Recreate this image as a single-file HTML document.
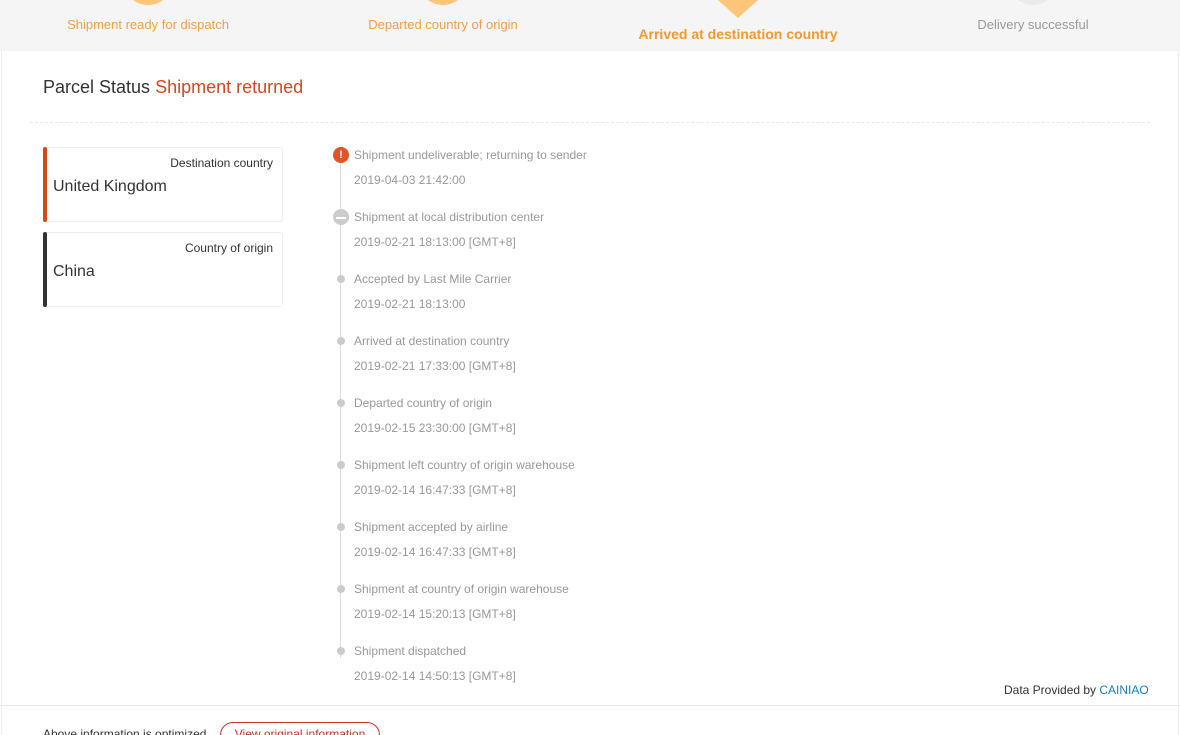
<!DOCTYPE html>
<html><head><meta charset="utf-8"><style>
*{margin:0;padding:0;box-sizing:border-box}
html,body{width:1180px;height:735px;overflow:hidden}
body{background:#fff;font-family:"Liberation Sans",sans-serif;position:relative}
.top{position:absolute;left:0;top:0;width:1180px;height:51px;background:#f5f5f5}
.step{position:absolute;font-size:13px;text-align:center;width:260px}
.circ{position:absolute;border-radius:50%}
.main{position:absolute;left:1px;top:51px;width:1178px;height:684px;border-left:1px solid #eee;border-right:1px solid #eee}
.abs{position:absolute;white-space:nowrap}
.card{position:absolute;left:43px;width:240px;height:75px;border:1px solid #eee;border-radius:3px;background:#fff}
.card .bar{position:absolute;left:-1px;top:-1px;bottom:-1px;width:4px;border-radius:2px}
.card .lab{position:absolute;right:9px;top:8px;font-size:12px;color:#333}
.card .val{position:absolute;left:9px;font-size:16px;color:#333}
.tl{position:absolute;left:340px;top:158px;width:1px;height:500px;background:#ddd}
.it{position:absolute;left:354px;font-size:12px;color:#999}
.dot{position:absolute;left:337px;width:8px;height:8px;border-radius:50%;background:#ccc}
</style></head><body>
<div class="top">
 <div class="circ" style="left:123px;top:-45px;width:50px;height:50px;background:#fcc57a"></div>
 <div class="circ" style="left:418px;top:-45px;width:50px;height:50px;background:#fcc57a"></div>
 <div style="position:absolute;left:718px;top:0;width:0;height:0;border-left:20px solid transparent;border-right:20px solid transparent;border-top:18px solid #fcc57a"></div>
 <div class="circ" style="left:1008px;top:-45px;width:50px;height:50px;background:#ebebeb"></div>
 <div class="step" style="left:18px;top:17px;color:#f0a045">Shipment ready for dispatch</div>
 <div class="step" style="left:313px;top:17px;color:#f0a045">Departed country of origin</div>
 <div class="step" style="left:608px;top:26px;color:#f09a30;font-weight:bold;font-size:14px">Arrived at destination country</div>
 <div class="step" style="left:903px;top:17px;color:#999">Delivery successful</div>
</div>
<div class="main"></div>
<div class="abs" style="left:43px;top:77px;font-size:18px;color:#333">Parcel Status <span style="color:#cc4a26">Shipment returned</span></div>
<div class="abs" style="left:30px;top:122px;width:1120px;border-top:1px dashed #e8e8e8"></div>
<div class="card" style="top:147px"><div class="bar" style="background:#d04a1e"></div><div class="lab">Destination country</div><div class="val" style="top:30px">United Kingdom</div></div>
<div class="card" style="top:232px"><div class="bar" style="background:#333"></div><div class="lab">Country of origin</div><div class="val" style="top:30px">China</div></div>
<div class="tl"></div>
<div class="circ" style="left:333px;top:147px;width:16px;height:16px;background:#e2522c;color:#fff;font-size:11px;font-weight:bold;text-align:center;line-height:16px">!</div>
<div class="circ" style="left:333px;top:209px;width:16px;height:16px;background:#ccc"><div style="position:absolute;left:3px;top:8px;width:10px;height:2px;background:#fff"></div></div>
<div class="it" style="top:148px">Shipment undeliverable; returning to sender</div><div class="it" style="top:173px">2019-04-03 21:42:00</div>
<div class="it" style="top:210px">Shipment at local distribution center</div><div class="it" style="top:235px">2019-02-21 18:13:00 [GMT+8]</div>
<div class="dot" style="top:275px"></div><div class="it" style="top:272px">Accepted by Last Mile Carrier</div><div class="it" style="top:297px">2019-02-21 18:13:00</div>
<div class="dot" style="top:337px"></div><div class="it" style="top:334px">Arrived at destination country</div><div class="it" style="top:359px">2019-02-21 17:33:00 [GMT+8]</div>
<div class="dot" style="top:399px"></div><div class="it" style="top:396px">Departed country of origin</div><div class="it" style="top:421px">2019-02-15 23:30:00 [GMT+8]</div>
<div class="dot" style="top:461px"></div><div class="it" style="top:458px">Shipment left country of origin warehouse</div><div class="it" style="top:483px">2019-02-14 16:47:33 [GMT+8]</div>
<div class="dot" style="top:523px"></div><div class="it" style="top:520px">Shipment accepted by airline</div><div class="it" style="top:545px">2019-02-14 16:47:33 [GMT+8]</div>
<div class="dot" style="top:585px"></div><div class="it" style="top:582px">Shipment at country of origin warehouse</div><div class="it" style="top:607px">2019-02-14 15:20:13 [GMT+8]</div>
<div class="dot" style="top:647px"></div><div class="it" style="top:644px">Shipment dispatched</div><div class="it" style="top:669px">2019-02-14 14:50:13 [GMT+8]</div>
<div class="abs" style="left:1004px;top:683px;font-size:12px;color:#333">Data Provided by <span style="color:#1a7ec0">CAINIAO</span></div>
<div class="abs" style="left:0;top:705px;width:1180px;border-top:1px solid #e8e8e8"></div>
<div class="abs" style="left:43px;top:727px;font-size:12px;color:#333">Above information is optimized</div>
<div class="abs" style="left:220px;top:722px;width:160px;height:26px;border:1px solid #c9302c;border-radius:13px;font-size:12px;color:#c9302c;text-align:center;line-height:22px">View original information</div>
</body></html>
